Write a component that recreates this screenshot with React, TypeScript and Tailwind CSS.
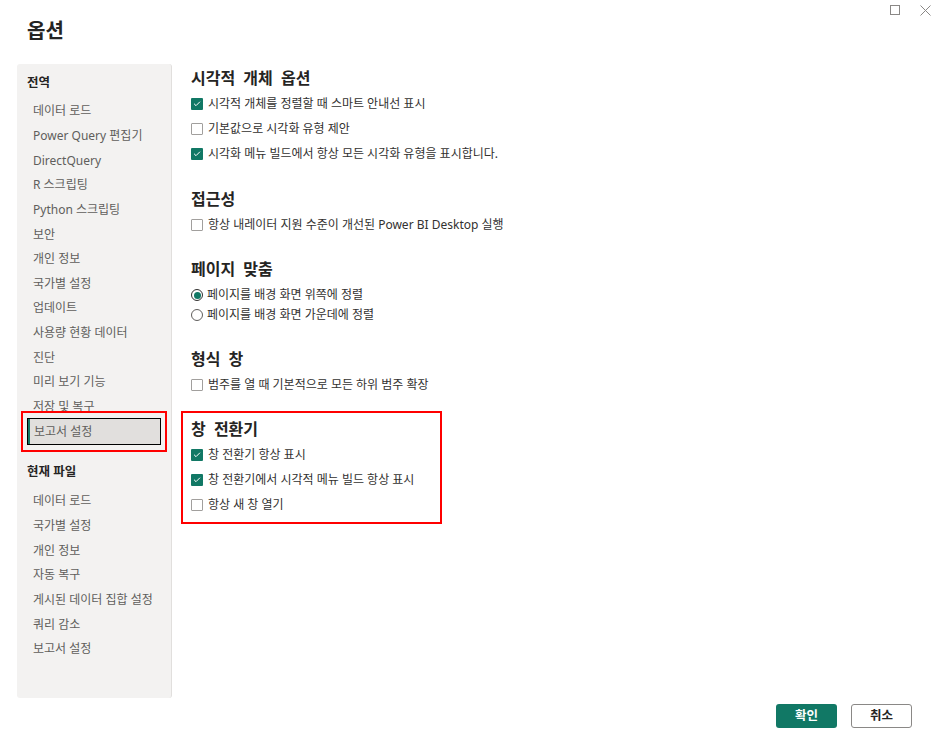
import { Check } from "lucide-react";

const FONT = "font-['Noto_Sans','Noto_Sans_CJK_KR',sans-serif]";

const globalItems = [
  "데이터 로드",
  "Power Query 편집기",
  "DirectQuery",
  "R 스크립팅",
  "Python 스크립팅",
  "보안",
  "개인 정보",
  "국가별 설정",
  "업데이트",
  "사용량 현황 데이터",
  "진단",
  "미리 보기 기능",
  "저장 및 복구",
];

const fileItems = [
  "데이터 로드",
  "국가별 설정",
  "개인 정보",
  "자동 복구",
  "게시된 데이터 집합 설정",
  "쿼리 감소",
  "보고서 설정",
];

function CheckRow({ label, checked }: { label: string; checked?: boolean }) {
  return (
    <div className="flex h-[25px] items-center gap-[5px]">
      {checked ? (
        <span className="flex h-[12px] w-[12px] items-center justify-center rounded-[1px] bg-[#117865]">
          <Check className="h-[8px] w-[8px] text-white" strokeWidth={3} />
        </span>
      ) : (
        <span className="h-[12px] w-[12px] rounded-[1px] border border-[#a19f9d] bg-white" />
      )}
      <span className="text-[12px] text-[#323130]">{label}</span>
    </div>
  );
}

function RadioRow({ label, checked }: { label: string; checked?: boolean }) {
  return (
    <div className="flex h-[20px] items-center gap-[4px]">
      {checked ? (
        <span className="flex h-[12px] w-[12px] items-center justify-center rounded-full border border-[#323130] bg-white">
          <span className="h-[7px] w-[7px] rounded-full bg-[#117865]" />
        </span>
      ) : (
        <span className="h-[12px] w-[12px] rounded-full border border-[#605e5c] bg-white" />
      )}
      <span className="text-[12px] text-[#323130]">{label}</span>
    </div>
  );
}

function Heading({ children }: { children: string }) {
  return (
    <div className="flex h-[24px] items-center text-[16px] font-bold text-[#252423] [word-spacing:4px]">
      {children}
    </div>
  );
}

function SideItem({ label }: { label: string }) {
  return (
    <div className="flex h-[24.65px] items-center pl-[16px] text-[12px] text-[#605e5c]">
      {label}
    </div>
  );
}

export default function App() {
  return (
    <div className={`relative h-[749px] w-[936px] overflow-hidden bg-white ${FONT}`}>
      <div className="flex h-[64px] justify-between pl-[27px] pr-[5px]">
        <h1 className="pt-[17px] text-[20px] font-bold leading-[28px] text-[#252423]">옵션</h1>
        <div className="mt-[5px] flex h-[10px] items-start gap-[20px]">
          <span className="h-[10px] w-[10px] border border-[#8a8886]" />
          <svg width="11" height="11" viewBox="0 0 11 11" className="text-[#8a8886]">
            <path d="M0.5 0.5 L10.5 10.5 M10.5 0.5 L0.5 10.5" stroke="currentColor" strokeWidth="1" />
          </svg>
        </div>
      </div>

      <div className="flex h-[634px]">
        <aside className="ml-[17px] w-[155px] rounded-[3px] border-r border-[#e1dfdd] bg-[#f3f2f1] pt-[10px]">
          <div className="flex h-[18px] items-center pl-[10px] text-[12.5px] font-bold text-[#252423]">
            전역
          </div>
          <div className="mt-[7px]">
            {globalItems.map((it) => (
              <SideItem key={it} label={it} />
            ))}
            <div className="relative mx-[10px] -my-[1.2px]">
              <div className="flex h-[27px] items-center border border-black bg-[#e1dfdd] text-[12px] text-[#605e5c]">
                <span className="mr-[4px] h-full w-[2px] bg-[#117865]" />
                보고서 설정
              </div>
              <div className="pointer-events-none absolute -inset-x-[6px] -inset-y-[7px] border-2 border-[#ff0000]" />
            </div>
          </div>
          <div className="mt-[19.5px] flex h-[18px] items-center pl-[10px] text-[12.5px] font-bold text-[#252423]">
            현재 파일
          </div>
          <div className="mt-[7.7px]">
            {fileItems.map((it) => (
              <SideItem key={it} label={it} />
            ))}
          </div>
        </aside>

        <main className="ml-[19px] pt-[2px]">
          <section>
            <Heading>시각적 개체 옵션</Heading>
            <div className="mt-[1.5px]">
              <CheckRow checked label="시각적 개체를 정렬할 때 스마트 안내선 표시" />
              <CheckRow label="기본값으로 시각화 유형 제안" />
              <CheckRow checked label="시각화 메뉴 빌드에서 항상 모든 시각화 유형을 표시합니다." />
            </div>
          </section>

          <section className="mt-[20.5px]">
            <Heading>접근성</Heading>
            <div className="mt-[1.5px]">
              <CheckRow label="항상 내레이터 지원 수준이 개선된 Power BI Desktop 실행" />
            </div>
          </section>

          <section className="mt-[19.5px]">
            <Heading>페이지 맞춤</Heading>
            <div className="mt-[4px]">
              <RadioRow checked label="페이지를 배경 화면 위쪽에 정렬" />
              <RadioRow label="페이지를 배경 화면 가운데에 정렬" />
            </div>
          </section>

          <section className="mt-[22px]">
            <Heading>형식 창</Heading>
            <div className="mt-[1.5px]">
              <CheckRow label="범주를 열 때 기본적으로 모든 하위 범주 확장" />
            </div>
          </section>

          <section className="relative mt-[19.5px]">
            <Heading>창 전환기</Heading>
            <div className="mt-[1.5px]">
              <CheckRow checked label="창 전환기 항상 표시" />
              <CheckRow checked label="창 전환기에서 시각적 메뉴 빌드 항상 표시" />
              <CheckRow label="항상 새 창 열기" />
            </div>
            <div className="pointer-events-none absolute -left-[10px] -top-[6px] -bottom-[6px] w-[261px] border-2 border-[#ff0000]" />
          </section>
        </main>
      </div>

      <div className="flex justify-end gap-[14px] pr-[24px] pt-[6px]">
        <button className="h-[24px] w-[61px] rounded-[3px] bg-[#117865] text-[12.5px] font-bold text-white">
          확인
        </button>
        <button className="h-[24px] w-[61px] rounded-[3px] border border-[#8a8886] bg-white text-[12.5px] font-bold text-[#252423]">
          취소
        </button>
      </div>
    </div>
  );
}
